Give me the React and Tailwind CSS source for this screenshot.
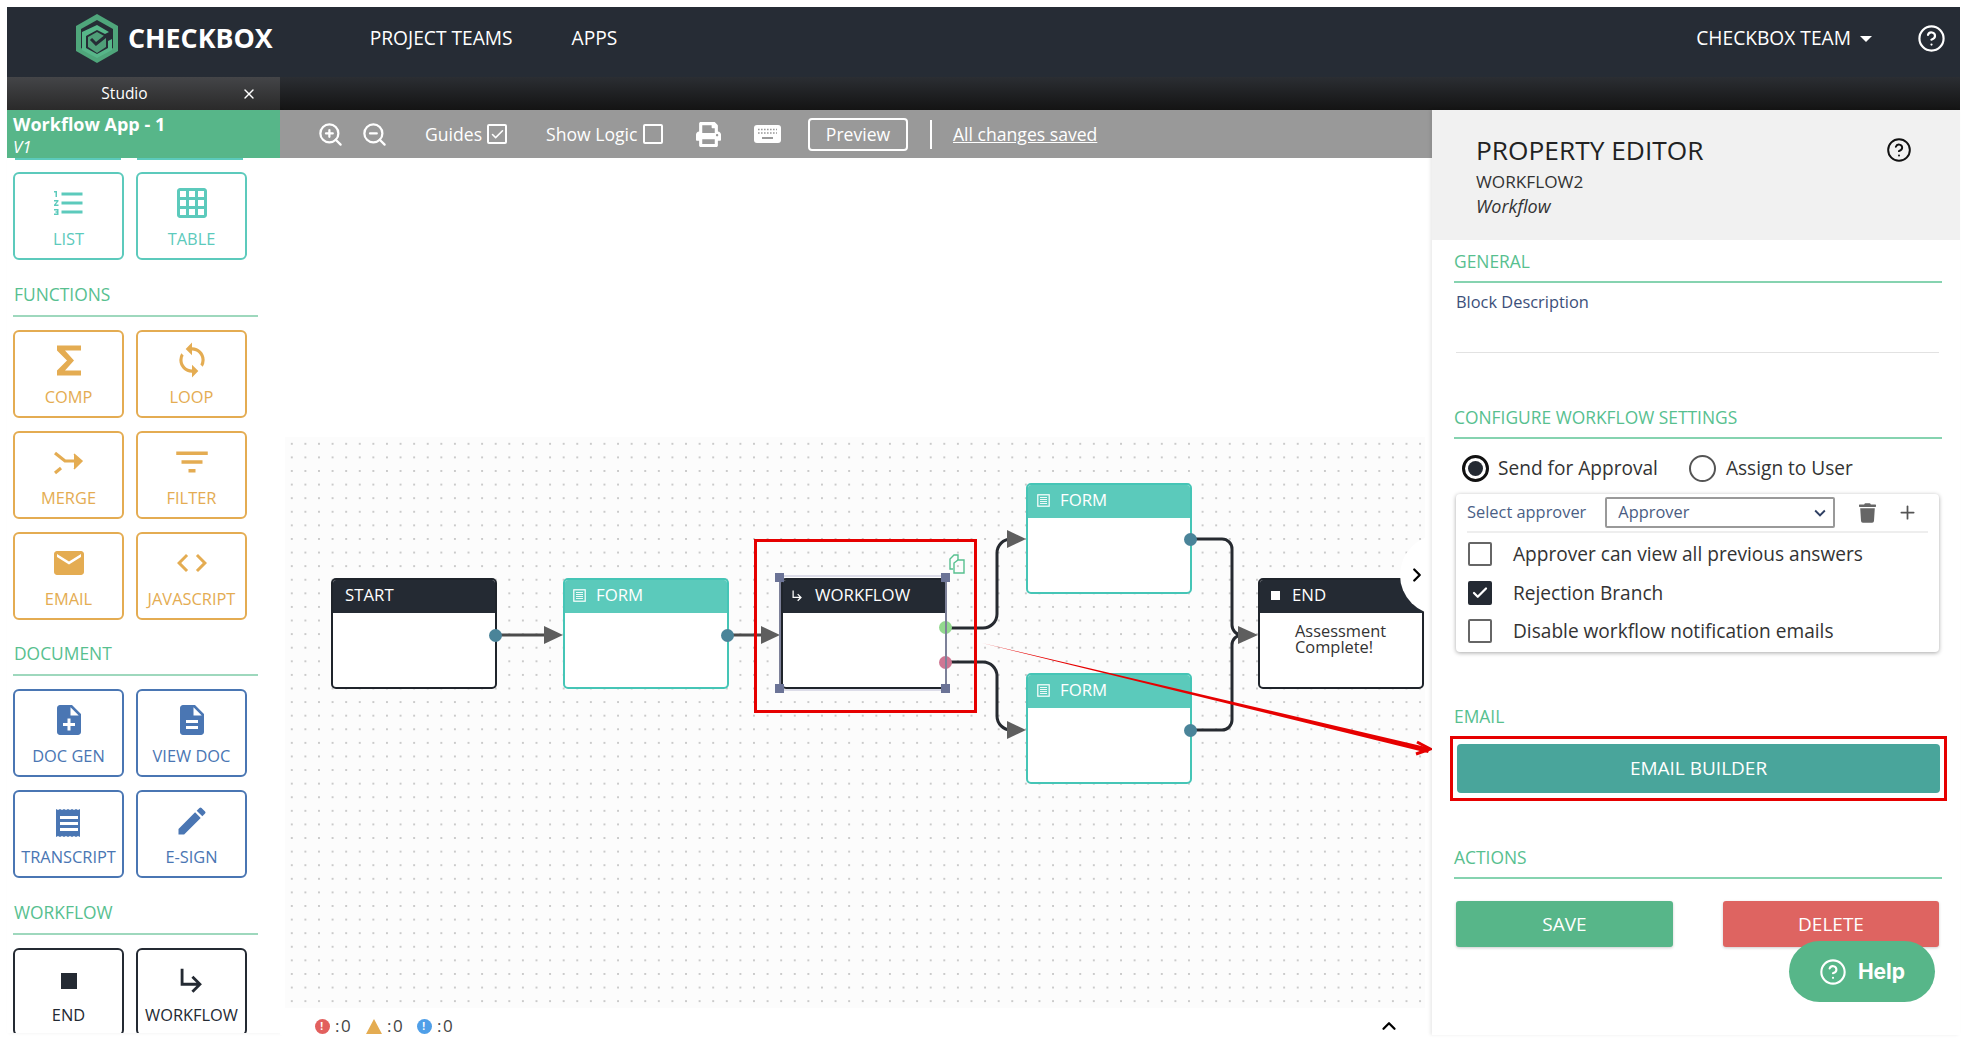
import React from "react";
import {
  MdFormatListNumbered,
  MdGridOn,
  MdSync,
  MdFilterList,
  MdEmail,
  MdCode,
  MdNoteAdd,
  MdDescription,
  MdEdit,
  MdStop,
  MdSubdirectoryArrowRight,
  MdKeyboardArrowDown,
} from "react-icons/md";
import { FaPrint, FaTrash } from "react-icons/fa";
import {
  ZoomIn,
  ZoomOut,
  CircleHelp,
  X,
  Plus,
  ChevronRight,
  ChevronUp,
  Check,
} from "lucide-react";

function Sigma({ className }) {
  return (
    <svg viewBox="0 0 24 30" className={className} fill="currentColor">
      <path d="M0 0h24v5H8l9 10-9 10h16v5H0v-5l10-10L0 5z" />
    </svg>
  );
}

function MergeIcon({ className }) {
  return (
    <svg viewBox="0 0 32 24" className={className} fill="none" stroke="currentColor" strokeWidth="3.2">
      <path d="M2 2l10 8h16" />
      <path d="M21 3l8 7-8 8" fill="currentColor" strokeWidth="1.5" />
      <path d="M2 22l6-5" />
    </svg>
  );
}

function TranscriptIcon({ className }) {
  return (
    <svg viewBox="0 0 26 28" className={className}>
      <path
        fill="currentColor"
        d="M0 0l2 1 2-1 2 1 2-1 2 1 2-1 2 1 2-1 2 1 2-1 2 1 2-1v28l-2-1-2 1-2-1-2 1-2-1-2 1-2-1-2 1-2-1-2 1-2-1-2 1z"
      />
      <path fill="#fff" d="M4 7h18v3H4zM4 13h18v3H4zM4 19h18v3H4z" />
    </svg>
  );
}

function FormIcon({ className }) {
  return (
    <svg viewBox="0 0 13 13" className={className} fill="none" stroke="#fff" strokeWidth="1.2">
      <rect x="0.8" y="0.8" width="11.4" height="11.4" />
      <path d="M3 3.5h7M3 5.5h7M3 7.5h7M3 9.5h7" strokeWidth="0.9" />
    </svg>
  );
}

function KeyboardIcon({ className }) {
  return (
    <svg viewBox="0 0 27 18" className={className}>
      <rect width="27" height="18" rx="3" fill="#fff" />
      <path
        stroke="#999"
        strokeWidth="1.6"
        strokeDasharray="1.6 1.4"
        d="M4 4.5h19M4 8h19"
      />
      <path stroke="#999" strokeWidth="2" d="M8 13h11" />
    </svg>
  );
}

function Logo() {
  return (
    <svg viewBox="0 0 42 49" className="h-[49px] w-[42px]">
      <path d="M21 0l21 12v25L21 49 0 37V12z" fill="#4fa67b" />
      <path d="M21 6L37 15v19L21 43 5 34V15z" fill="#262c35" />
      <path d="M21 11l12 7-4 2-8-4-11 6v12l11 6 11-6v-7l4-2v11L21 44 6 36V18z" fill="#57b689" />
      <path d="M21 18l9 5v10l-9 6-9-6V23z" fill="#4f9f78" />
      <path d="M15 25l5 5 10-8" fill="none" stroke="#262c35" strokeWidth="3" />
    </svg>
  );
}

const tileColors = {
  teal: "border-[#5ccabc] text-[#5ccabc]",
  orange: "border-[#e4ac52] text-[#e4ac52]",
  blue: "border-[#4a76b3] text-[#4a76b3]",
  dark: "border-[#242a33] text-[#242a33]",
};

function Tile({ color, label, icon }) {
  return (
    <div
      className={`flex h-[88px] w-[111px] flex-col items-center rounded-md border-[2.5px] bg-white ${tileColors[color]}`}
    >
      <div className="flex h-[49px] w-full items-end justify-center pb-[2px]">{icon}</div>
      <div className="mt-[3.5px] whitespace-nowrap text-[16.4px] leading-[24px]">{label}</div>
    </div>
  );
}

function SideHeading({ children, className }) {
  return (
    <div className={className}>
      <div className="pl-[1px] text-[17.4px] leading-[22px] text-[#57c08f]">{children}</div>
      <div className="mt-[10px] h-[2px] w-[245px] bg-[#9ed8bd]" />
    </div>
  );
}

function Sidebar() {
  return (
    <aside className="h-[923px] w-[273px] shrink-0 overflow-hidden bg-white shadow-[2px_0_4px_rgba(0,0,0,0.06)]">
      <div className="flex h-[48px] flex-col justify-center bg-[#57b689] pl-[6px] text-white">
        <div className="mt-[3px] text-[18px] font-bold leading-[23px]">Workflow App - 1</div>
        <div className="text-[17px] italic leading-[22px]">V1</div>
      </div>
      <div className="flex gap-[16px] pl-[8px]">
        <div className="h-[2px] w-[106px] bg-[#5ccabc]" />
        <div className="h-[2px] w-[106px] bg-[#5ccabc]" />
      </div>
      <div className="px-[6px]">
        <div className="mt-[12px] flex gap-[12px]">
          <Tile color="teal" label="LIST" icon={<MdFormatListNumbered className="text-[36px]" />} />
          <Tile color="teal" label="TABLE" icon={<MdGridOn className="text-[36px]" />} />
        </div>
        <SideHeading className="mt-[23px]">FUNCTIONS</SideHeading>
        <div className="mt-[13px] grid grid-cols-[111px_111px] gap-x-[12px] gap-y-[13px]">
          <Tile color="orange" label="COMP" icon={<Sigma className="mb-[3px] h-[31px] w-[24px]" />} />
          <Tile color="orange" label="LOOP" icon={<MdSync className="text-[38px]" />} />
          <Tile color="orange" label="MERGE" icon={<MergeIcon className="mb-[5px] h-[24px] w-[32px]" />} />
          <Tile color="orange" label="FILTER" icon={<MdFilterList className="-mb-[3px] text-[42px]" />} />
          <Tile color="orange" label="EMAIL" icon={<MdEmail className="text-[36px]" />} />
          <Tile color="orange" label="JAVASCRIPT" icon={<MdCode className="text-[36px]" />} />
        </div>
        <SideHeading className="mt-[22px]">DOCUMENT</SideHeading>
        <div className="mt-[13px] grid grid-cols-[111px_111px] gap-x-[12px] gap-y-[13px]">
          <Tile color="blue" label="DOC GEN" icon={<MdNoteAdd className="text-[36px]" />} />
          <Tile color="blue" label="VIEW DOC" icon={<MdDescription className="text-[36px]" />} />
          <Tile color="blue" label="TRANSCRIPT" icon={<TranscriptIcon className="mb-[2px] h-[28px] w-[26px]" />} />
          <Tile color="blue" label="E-SIGN" icon={<MdEdit className="text-[36px]" />} />
        </div>
        <SideHeading className="mt-[23px]">WORKFLOW</SideHeading>
        <div className="mt-[13px] grid grid-cols-[111px_111px] gap-[12px]">
          <Tile color="dark" label="END" icon={<MdStop className="text-[32px]" />} />
          <Tile color="dark" label="WORKFLOW" icon={<MdSubdirectoryArrowRight className="text-[34px]" />} />
        </div>
      </div>
    </aside>
  );
}

function ToolbarCheck({ checked }) {
  return (
    <span className="flex h-[20px] w-[20px] items-center justify-center rounded-[2px] border-2 border-white">
      {checked && <Check className="h-[15px] w-[15px] text-white" strokeWidth={2.5} />}
    </span>
  );
}

function Toolbar() {
  return (
    <div className="flex h-[48px] items-center bg-[#999999] text-[17.6px] text-white">
      <ZoomIn className="ml-[37px] h-[27px] w-[27px]" strokeWidth={2} />
      <ZoomOut className="ml-[17px] h-[27px] w-[27px]" strokeWidth={2} />
      <span className="ml-[37px] w-[57px] whitespace-nowrap">Guides</span>
      <span className="ml-[5px]">
        <ToolbarCheck checked />
      </span>
      <span className="ml-[39px] w-[91px] whitespace-nowrap">Show Logic</span>
      <span className="ml-[6px]">
        <ToolbarCheck />
      </span>
      <FaPrint className="ml-[32px] h-[25px] w-[27px]" />
      <KeyboardIcon className="ml-[32px] h-[18px] w-[27px]" />
      <div className="ml-[27px] flex h-[33px] w-[100px] items-center justify-center rounded-[4px] border-2 border-white">
        Preview
      </div>
      <div className="ml-[22px] h-[29px] w-[2px] bg-white" />
      <span className="ml-[21px] underline">All changes saved</span>
    </div>
  );
}

function Node({ x, y, title, teal, icon, headerClass, children }) {
  return (
    <div
      style={{ left: x, top: y }}
      className={`absolute h-[111px] w-[166px] overflow-hidden rounded-[5px] border-2 bg-white ${
        teal ? "border-[#45c5b6]" : "border-[#1f242b]"
      }`}
    >
      <div
        className={`flex h-[33px] items-center pb-[3px] text-[16.8px] text-white ${headerClass} ${
          teal ? "bg-[#5bcabb]" : "bg-[#242a33]"
        }`}
      >
        {icon}
        {title}
      </div>
      {children}
    </div>
  );
}

function Port({ x, y, color }) {
  return (
    <div
      style={{ left: x - 6.5, top: y - 6.5, backgroundColor: color }}
      className="absolute h-[13px] w-[13px] rounded-full"
    />
  );
}

function Handle({ x, y }) {
  return <div style={{ left: x - 4, top: y - 4 }} className="absolute h-[9px] w-[9px] bg-[#6b7396]" />;
}

function Edges() {
  return (
    <svg viewBox="0 0 1152 890" className="absolute inset-0 h-[890px] w-[1152px]" fill="none">
      <g stroke="#4b4b4b" strokeWidth="3">
        <path d="M215 477h50" />
        <path d="M447 477h36" />
      </g>
      <g stroke="#262a30" strokeWidth="3">
        <path d="M671 470h32a14 14 0 0 0 14-14v-61a14 14 0 0 1 14-14h6" />
        <path d="M671 504h32a14 14 0 0 1 14 14v40a14 14 0 0 0 14 14h6" />
        <path d="M916 381h26a10 10 0 0 1 10 10v76a10 10 0 0 0 10 10" />
        <path d="M916 572h26a10 10 0 0 0 10-10v-75a10 10 0 0 1 10-10" />
      </g>
      <g fill="#5e5e5e">
        <path d="M264 468l19 9-19 9z" />
        <path d="M481 468l19 9-19 9z" />
        <path d="M727 372l19 9-19 9z" />
        <path d="M727 563l19 9-19 9z" />
        <path d="M958 468l20 9-20 9z" />
      </g>
    </svg>
  );
}

function RedArrow() {
  return (
    <svg viewBox="0 0 1152 890" className="absolute inset-0 h-[890px] w-[1152px]" fill="none">
      <polygon points="702,485 1150,590 1148,595" fill="#e60000" />
      <path d="M1137 584l13 7-14 5" stroke="#e60000" strokeWidth="3" />
    </svg>
  );
}

function Canvas() {
  return (
    <div className="relative h-[877px] bg-white">
      <div className="absolute bottom-[27px] left-[5px] right-[7px] top-[279px] bg-[#fcfcfc] bg-[radial-gradient(#cacaca_0.8px,transparent_1px)] bg-[length:13.6px_13.6px]" />
      <Edges />

      <Node x={51} y={420} title="START" headerClass="pl-[12px]" />
      <Node
        x={283}
        y={420}
        teal
        title="FORM"
        headerClass="gap-[10px] pl-[8px]"
        icon={<FormIcon className="h-[13px] w-[13px]" />}
      />
      <Node
        x={501}
        y={420}
        title="WORKFLOW"
        headerClass="gap-[10px] pl-[7px]"
        icon={<MdSubdirectoryArrowRight className="h-[15px] w-[15px]" />}
      />
      <Node
        x={746}
        y={325}
        teal
        title="FORM"
        headerClass="gap-[10px] pl-[9px]"
        icon={<FormIcon className="h-[13px] w-[13px]" />}
      />
      <Node
        x={746}
        y={515}
        teal
        title="FORM"
        headerClass="gap-[10px] pl-[9px]"
        icon={<FormIcon className="h-[13px] w-[13px]" />}
      />
      <Node
        x={978}
        y={420}
        title="END"
        headerClass="gap-[12px] pl-[11px]"
        icon={<span className="h-[9px] w-[9px] bg-white" />}
      >
        <div className="ml-[35px] mt-[10px] text-[16.4px] leading-[16px] text-[#333]">
          Assessment
          <br />
          Complete!
        </div>
      </Node>

      <Port x={215} y={477} color="#4a8499" />
      <Port x={447} y={477} color="#4a8499" />
      <Port x={665} y={469} color="#93d98f" />
      <Port x={665} y={504} color="#cf7693" />
      <Port x={910} y={381} color="#4a8499" />
      <Port x={910} y={572} color="#4a8499" />

      {/* selection round the workflow block */}
      <div className="absolute left-[499px] top-[417px] h-[116px] w-[168px] border-x-2 border-x-[#7d8199] border-y-2 border-y-[#dcdce8]" />
      <Handle x={499} y={419} />
      <Handle x={665} y={419} />
      <Handle x={499} y={530} />
      <Handle x={665} y={530} />
      <svg viewBox="0 0 18 20" className="absolute left-[668px] top-[396px] h-[20px] w-[18px]" fill="none" stroke="#57c08f" strokeWidth="1.4">
        <path d="M5 15H2V5l4-4h4v5" />
        <path d="M6 19V9l4-3h6v13z" />
      </svg>

      {/* red highlight */}
      <div className="absolute left-[474px] top-[381px] h-[174px] w-[223px] border-[3px] border-[#e60000]" />
      <RedArrow />

      {/* panel toggle */}
      <div className="absolute left-[1120px] top-[377px] h-[80px] w-[32px] overflow-hidden">
        <div className="flex h-[80px] w-[80px] items-center rounded-full bg-white pl-[6px]">
          <ChevronRight className="h-[22px] w-[22px] text-black" strokeWidth={2.5} />
        </div>
      </div>

      {/* problem counts */}
      <div className="absolute bottom-0 left-0 flex h-[27px] w-full items-center bg-white pl-[35px] pt-[9px] text-[17px] tracking-[1.5px] text-[#444]">
        <span className="flex h-[15px] w-[15px] items-center justify-center rounded-full bg-[#e2605e] text-[10px] font-bold text-white">!</span>
        <span className="ml-[5px] w-[20px]">:0</span>
        <span className="ml-[11px] h-0 w-0 border-x-[8px] border-b-[15px] border-x-transparent border-b-[#e4ac52]" />
        <span className="ml-[5px] w-[20px]">:0</span>
        <span className="ml-[10px] flex h-[15px] w-[15px] items-center justify-center rounded-full bg-[#4f9fe8] text-[10px] font-bold text-white">!</span>
        <span className="ml-[5px]">:0</span>
        <ChevronUp className="ml-auto mr-[32px] h-[22px] w-[22px] text-black" strokeWidth={2.5} />
      </div>
    </div>
  );
}

function PanelHeading({ children, className }) {
  return (
    <div className={className}>
      <div className="text-[17.4px] leading-[22px] text-[#57c08f]">{children}</div>
    </div>
  );
}

function PanelLine({ className }) {
  return <div className={`h-[2px] w-[488px] bg-[#86d3b0] ${className || ""}`} />;
}

function CheckRow({ checked, label, className }) {
  return (
    <div className={`flex h-[24px] items-center ${className || ""}`}>
      <span
        className={`flex h-[24px] w-[24px] items-center justify-center rounded-[2px] border-2 ${
          checked ? "border-[#242a33] bg-[#242a33]" : "border-[#666]"
        }`}
      >
        {checked && <Check className="h-[18px] w-[18px] text-white" strokeWidth={3} />}
      </span>
      <span className="ml-[21px] text-[19.1px] text-[#333]">{label}</span>
    </div>
  );
}

function PropertyPanel() {
  return (
    <aside className="relative h-[925px] w-[528px] shrink-0 bg-white shadow-[-2px_0_3px_rgba(0,0,0,0.08)]">
      <div className="h-[130px] bg-[#f1f1f1] pl-[44px] pr-[48px] pt-[24px]">
        <div className="flex items-center justify-between">
          <div className="text-[26.3px] leading-[32px] text-[#222]">PROPERTY EDITOR</div>
          <CircleHelp className="h-[26px] w-[26px] text-[#111]" strokeWidth={1.8} />
        </div>
        <div className="mt-[4px] text-[17.2px] leading-[24px] text-[#333]">WORKFLOW2</div>
        <div className="text-[18px] italic leading-[24px] text-[#333]">Workflow</div>
      </div>

      <div className="pl-[22px]">
        <PanelHeading className="mt-[10px]">GENERAL</PanelHeading>
        <PanelLine className="mt-[9px]" />
        <div className="ml-[2px] mt-[8px] text-[16.4px] leading-[22px] text-[#3c4f7a]">Block Description</div>
        <div className="ml-[2px] mt-[39px] h-[1px] w-[483px] bg-[#e2e2e2]" />

        <PanelHeading className="mt-[53px]">CONFIGURE WORKFLOW SETTINGS</PanelHeading>
        <PanelLine className="mt-[9px]" />

        <div className="mt-[16px] flex h-[27px] items-center pl-[8px] text-[19.1px] text-[#333]">
          <span className="flex h-[27px] w-[27px] items-center justify-center rounded-full border-[3px] border-[#111]">
            <span className="h-[15px] w-[15px] rounded-full bg-[#242a33]" />
          </span>
          <span className="ml-[9px]">Send for Approval</span>
          <span className="ml-[31px] h-[27px] w-[27px] rounded-full border-2 border-[#555]" />
          <span className="ml-[10px]">Assign to User</span>
        </div>

        <div className="ml-[2px] mt-[12px] h-[158px] w-[483px] rounded-[4px] bg-white px-[11px] shadow-[0_1px_4px_rgba(0,0,0,0.35)]">
          <div className="flex h-[39px] items-center border-b-2 border-[#eeeeee]">
            <span className="text-[16.4px] text-[#4b5f86]">Select approver</span>
            <div className="ml-[19px] flex h-[31px] w-[230px] items-center justify-between rounded-[2px] border-2 border-[#999] pl-[11px] pr-[2px] text-[16.4px] text-[#4a5c82]">
              Approver
              <MdKeyboardArrowDown className="h-[22px] w-[22px] text-[#2f4063]" />
            </div>
            <FaTrash className="ml-[24px] h-[20px] w-[17px] text-[#666]" />
            <Plus className="ml-[21px] h-[21px] w-[21px] text-[#555]" strokeWidth={2} />
          </div>
          <CheckRow className="ml-[1px] mt-[9px]" label="Approver can view all previous answers" />
          <CheckRow className="ml-[1px] mt-[15px]" checked label="Rejection Branch" />
          <CheckRow className="ml-[1px] mt-[14px]" label="Disable workflow notification emails" />
        </div>

        <PanelHeading className="mt-[53px]">EMAIL</PanelHeading>
        <div className="ml-[-4px] mt-[9px] flex h-[65px] w-[497px] items-center justify-center border-[3px] border-[#e60000]">
          <div className="flex h-[49px] w-[483px] items-center justify-center rounded-[4px] bg-[#49a59b] text-[19px] text-white">
            EMAIL BUILDER
          </div>
        </div>

        <PanelHeading className="mt-[45px]">ACTIONS</PanelHeading>
        <PanelLine className="mt-[9px]" />

        <div className="ml-[2px] mt-[22px] flex w-[483px] justify-between">
          <div className="flex h-[46px] w-[217px] items-center justify-center rounded-[3px] bg-[#57b689] text-[19px] text-white shadow-[0_1px_3px_rgba(0,0,0,0.2)]">
            SAVE
          </div>
          <div className="flex h-[46px] w-[216px] items-center justify-center rounded-[3px] bg-[#de6461] text-[19px] text-white shadow-[0_1px_3px_rgba(0,0,0,0.2)]">
            DELETE
          </div>
        </div>
      </div>

      <div className="absolute left-[357px] top-[831px] flex h-[61px] w-[146px] items-center justify-center gap-[11px] rounded-full bg-[#57b689] text-[21px] font-bold text-white">
        <CircleHelp className="h-[28px] w-[28px]" strokeWidth={1.8} />
        <span className="font-['Inter',sans-serif]">Help</span>
      </div>
    </aside>
  );
}

export default function App() {
  return (
    <div className="h-[1042px] w-[1970px] overflow-hidden bg-white pl-[7px] pt-[7px] font-['Open_Sans',sans-serif]">
      <div className="w-[1953px]">
        <header className="flex h-[70px] items-center bg-[#262c35] pb-[7px] text-white">
          <div className="ml-[69px]">
            <Logo />
          </div>
          <div className="ml-[10px] text-[26.8px] font-bold">CHECKBOX</div>
          <nav className="ml-[97px] flex gap-[59px] text-[19.2px]">
            <span>PROJECT TEAMS</span>
            <span>APPS</span>
          </nav>
          <div className="ml-auto flex items-center text-[19.2px]">
            CHECKBOX TEAM
            <span className="ml-[9px] mt-[2px] h-0 w-0 border-x-[6px] border-t-[6px] border-x-transparent border-t-white" />
          </div>
          <CircleHelp className="ml-[45px] mr-[14px] h-[29px] w-[29px]" strokeWidth={1.8} />
        </header>

        <div className="flex h-[33px] bg-gradient-to-b from-[#2b2e33] to-[#141414]">
          <div className="relative flex w-[273px] items-center justify-center bg-gradient-to-b from-[#444548] to-[#2a2a2a] pr-[38px] text-[15.5px] text-white">
            Studio
            <X className="absolute right-[23px] h-[16px] w-[16px]" strokeWidth={2} />
          </div>
        </div>

        <div className="flex">
          <Sidebar />
          <main className="w-[1152px] shrink-0">
            <Toolbar />
            <Canvas />
          </main>
          <PropertyPanel />
        </div>
      </div>
    </div>
  );
}
